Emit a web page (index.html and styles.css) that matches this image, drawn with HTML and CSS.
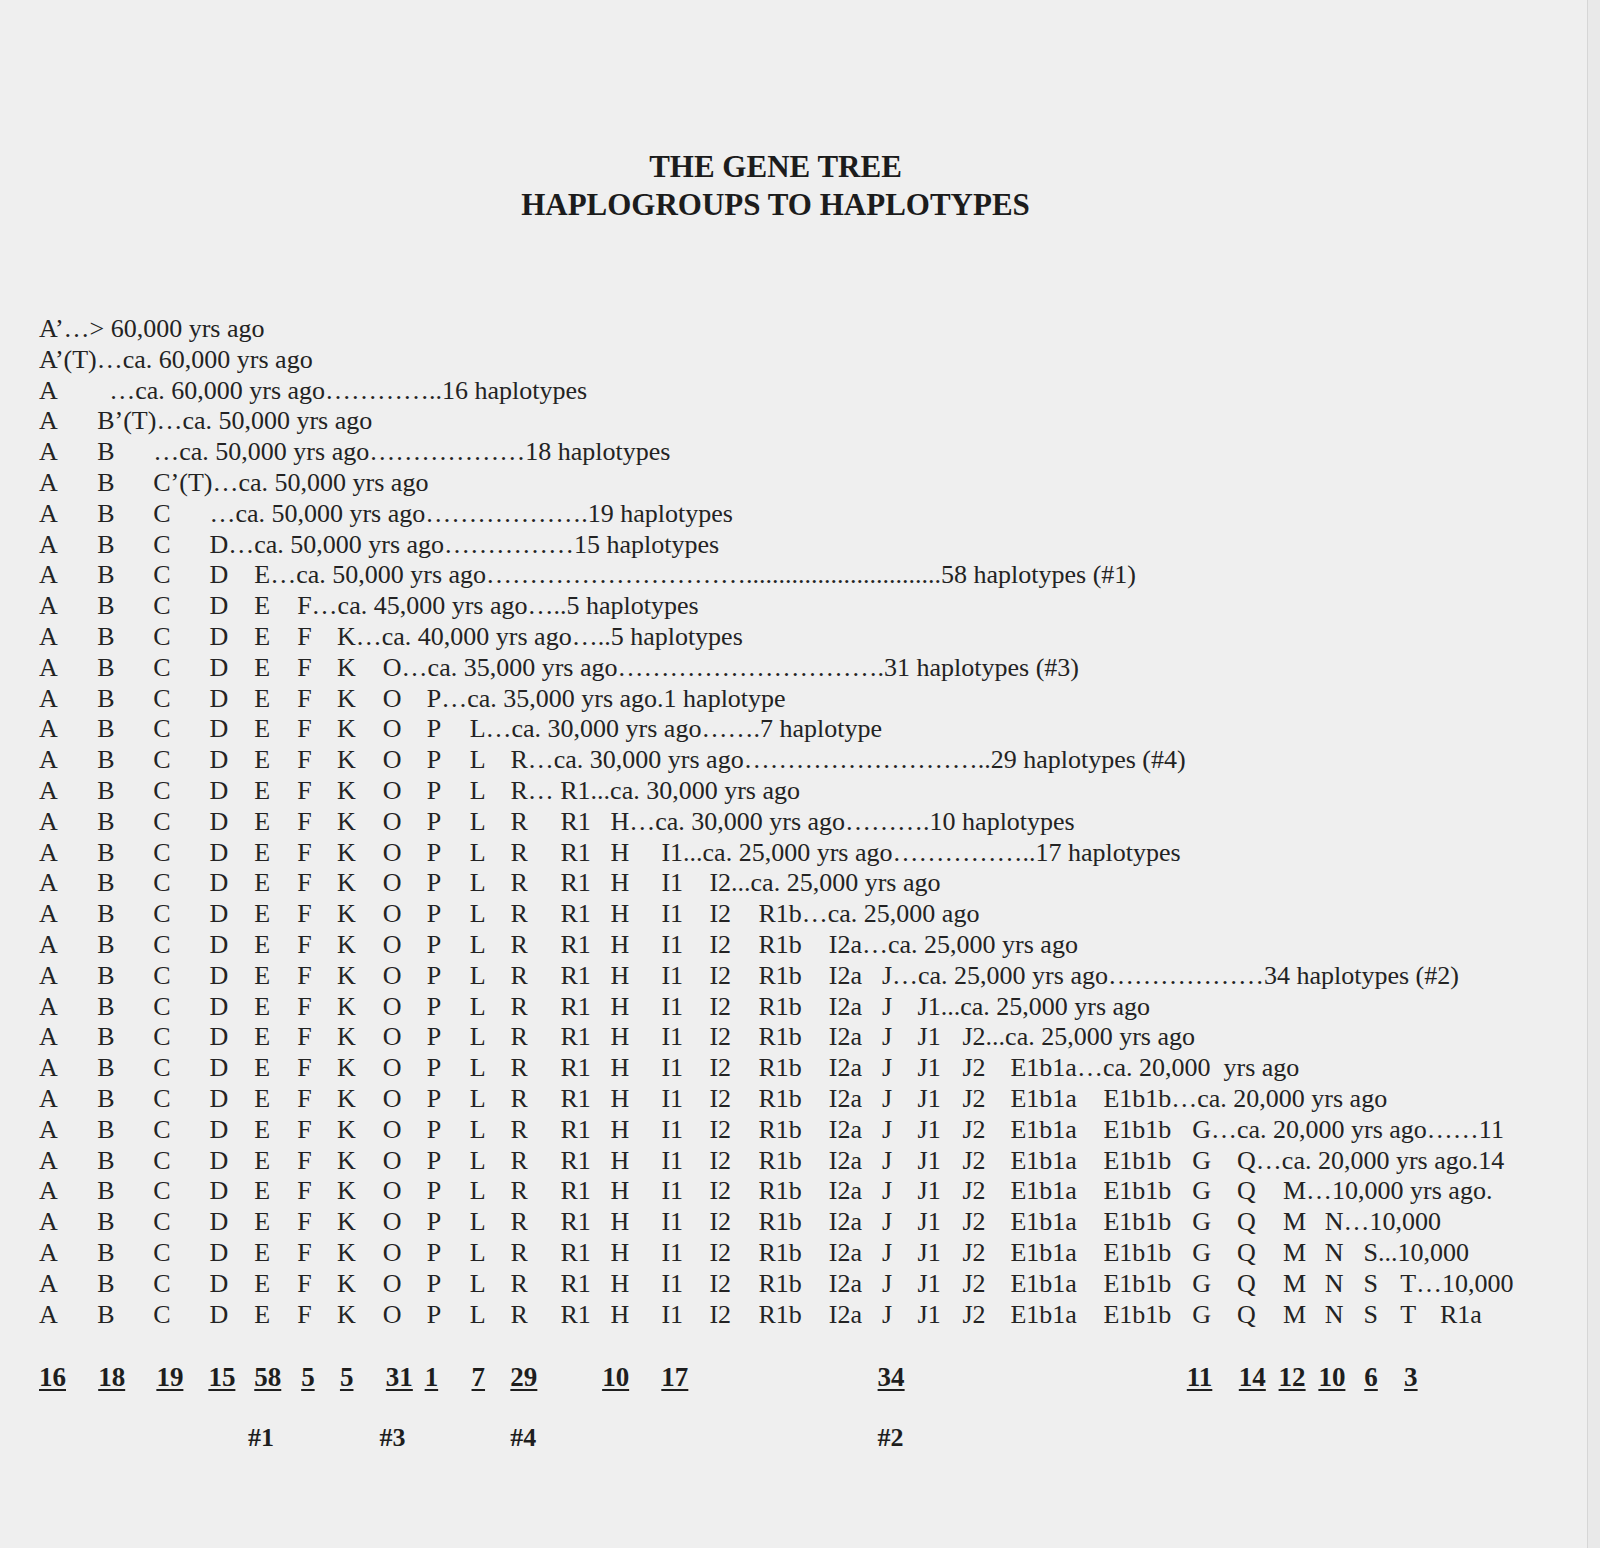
FILE: index.html
```html
<!DOCTYPE html>
<html lang="en">
<head>
<meta charset="utf-8">
<title>The Gene Tree – Haplogroups to Haplotypes</title>
<link rel="stylesheet" href="styles.css">
</head>
<body>
<div class="page">
  <header class="title">
    <h1>THE GENE TREE<br>HAPLOGROUPS TO HAPLOTYPES</h1>
  </header>

  <div class="tree">
    <div class="row"><span class="d">A’…&gt; 60,000 yrs ago</span></div>
    <div class="row"><span class="d">A’(T)…ca. 60,000 yrs ago</span></div>
    <div class="row"><span class="c">A</span><span class="d ind">…ca. 60,000 yrs ago…………..16 haplotypes</span></div>
    <div class="row"><span class="c">A</span><span class="d">B’(T)…ca. 50,000 yrs ago</span></div>
    <div class="row"><span class="c">A</span><span class="c">B</span><span class="d">…ca. 50,000 yrs ago………………18 haplotypes</span></div>
    <div class="row"><span class="c">A</span><span class="c">B</span><span class="d">C’(T)…ca. 50,000 yrs ago</span></div>
    <div class="row"><span class="c">A</span><span class="c">B</span><span class="c">C</span><span class="d">…ca. 50,000 yrs ago……………….19 haplotypes</span></div>
    <div class="row"><span class="c">A</span><span class="c">B</span><span class="c">C</span><span class="d">D…ca. 50,000 yrs ago……………15 haplotypes</span></div>
    <div class="row"><span class="c">A</span><span class="c">B</span><span class="c">C</span><span class="c">D</span><span class="d">E…ca. 50,000 yrs ago…………………………..............................58 haplotypes (#1)</span></div>
    <div class="row"><span class="c">A</span><span class="c">B</span><span class="c">C</span><span class="c">D</span><span class="c">E</span><span class="d">F…ca. 45,000 yrs ago…..5 haplotypes</span></div>
    <div class="row"><span class="c">A</span><span class="c">B</span><span class="c">C</span><span class="c">D</span><span class="c">E</span><span class="c">F</span><span class="d">K…ca. 40,000 yrs ago…..5 haplotypes</span></div>
    <div class="row"><span class="c">A</span><span class="c">B</span><span class="c">C</span><span class="c">D</span><span class="c">E</span><span class="c">F</span><span class="c">K</span><span class="d">O…ca. 35,000 yrs ago………………………….31 haplotypes (#3)</span></div>
    <div class="row"><span class="c">A</span><span class="c">B</span><span class="c">C</span><span class="c">D</span><span class="c">E</span><span class="c">F</span><span class="c">K</span><span class="c">O</span><span class="d">P…ca. 35,000 yrs ago.1 haplotype</span></div>
    <div class="row"><span class="c">A</span><span class="c">B</span><span class="c">C</span><span class="c">D</span><span class="c">E</span><span class="c">F</span><span class="c">K</span><span class="c">O</span><span class="c">P</span><span class="d">L…ca. 30,000 yrs ago…….7 haplotype</span></div>
    <div class="row"><span class="c">A</span><span class="c">B</span><span class="c">C</span><span class="c">D</span><span class="c">E</span><span class="c">F</span><span class="c">K</span><span class="c">O</span><span class="c">P</span><span class="c">L</span><span class="d">R…ca. 30,000 yrs ago………………………..29 haplotypes (#4)</span></div>
    <div class="row"><span class="c">A</span><span class="c">B</span><span class="c">C</span><span class="c">D</span><span class="c">E</span><span class="c">F</span><span class="c">K</span><span class="c">O</span><span class="c">P</span><span class="c">L</span><span class="d">R… R1...ca. 30,000 yrs ago</span></div>
    <div class="row"><span class="c">A</span><span class="c">B</span><span class="c">C</span><span class="c">D</span><span class="c">E</span><span class="c">F</span><span class="c">K</span><span class="c">O</span><span class="c">P</span><span class="c">L</span><span class="c">R</span><span class="c">R1</span><span class="d">H…ca. 30,000 yrs ago……….10 haplotypes</span></div>
    <div class="row"><span class="c">A</span><span class="c">B</span><span class="c">C</span><span class="c">D</span><span class="c">E</span><span class="c">F</span><span class="c">K</span><span class="c">O</span><span class="c">P</span><span class="c">L</span><span class="c">R</span><span class="c">R1</span><span class="c">H</span><span class="d">I1...ca. 25,000 yrs ago……………..17 haplotypes</span></div>
    <div class="row"><span class="c">A</span><span class="c">B</span><span class="c">C</span><span class="c">D</span><span class="c">E</span><span class="c">F</span><span class="c">K</span><span class="c">O</span><span class="c">P</span><span class="c">L</span><span class="c">R</span><span class="c">R1</span><span class="c">H</span><span class="c">I1</span><span class="d">I2...ca. 25,000 yrs ago</span></div>
    <div class="row"><span class="c">A</span><span class="c">B</span><span class="c">C</span><span class="c">D</span><span class="c">E</span><span class="c">F</span><span class="c">K</span><span class="c">O</span><span class="c">P</span><span class="c">L</span><span class="c">R</span><span class="c">R1</span><span class="c">H</span><span class="c">I1</span><span class="c">I2</span><span class="d">R1b…ca. 25,000 ago</span></div>
    <div class="row"><span class="c">A</span><span class="c">B</span><span class="c">C</span><span class="c">D</span><span class="c">E</span><span class="c">F</span><span class="c">K</span><span class="c">O</span><span class="c">P</span><span class="c">L</span><span class="c">R</span><span class="c">R1</span><span class="c">H</span><span class="c">I1</span><span class="c">I2</span><span class="c">R1b</span><span class="d">I2a…ca. 25,000 yrs ago</span></div>
    <div class="row"><span class="c">A</span><span class="c">B</span><span class="c">C</span><span class="c">D</span><span class="c">E</span><span class="c">F</span><span class="c">K</span><span class="c">O</span><span class="c">P</span><span class="c">L</span><span class="c">R</span><span class="c">R1</span><span class="c">H</span><span class="c">I1</span><span class="c">I2</span><span class="c">R1b</span><span class="c">I2a</span><span class="d">J…ca. 25,000 yrs ago………………34 haplotypes (#2)</span></div>
    <div class="row"><span class="c">A</span><span class="c">B</span><span class="c">C</span><span class="c">D</span><span class="c">E</span><span class="c">F</span><span class="c">K</span><span class="c">O</span><span class="c">P</span><span class="c">L</span><span class="c">R</span><span class="c">R1</span><span class="c">H</span><span class="c">I1</span><span class="c">I2</span><span class="c">R1b</span><span class="c">I2a</span><span class="c">J</span><span class="d">J1...ca. 25,000 yrs ago</span></div>
    <div class="row"><span class="c">A</span><span class="c">B</span><span class="c">C</span><span class="c">D</span><span class="c">E</span><span class="c">F</span><span class="c">K</span><span class="c">O</span><span class="c">P</span><span class="c">L</span><span class="c">R</span><span class="c">R1</span><span class="c">H</span><span class="c">I1</span><span class="c">I2</span><span class="c">R1b</span><span class="c">I2a</span><span class="c">J</span><span class="c">J1</span><span class="d">J2...ca. 25,000 yrs ago</span></div>
    <div class="row"><span class="c">A</span><span class="c">B</span><span class="c">C</span><span class="c">D</span><span class="c">E</span><span class="c">F</span><span class="c">K</span><span class="c">O</span><span class="c">P</span><span class="c">L</span><span class="c">R</span><span class="c">R1</span><span class="c">H</span><span class="c">I1</span><span class="c">I2</span><span class="c">R1b</span><span class="c">I2a</span><span class="c">J</span><span class="c">J1</span><span class="c">J2</span><span class="d">E1b1a…ca. 20,000&nbsp; yrs ago</span></div>
    <div class="row"><span class="c">A</span><span class="c">B</span><span class="c">C</span><span class="c">D</span><span class="c">E</span><span class="c">F</span><span class="c">K</span><span class="c">O</span><span class="c">P</span><span class="c">L</span><span class="c">R</span><span class="c">R1</span><span class="c">H</span><span class="c">I1</span><span class="c">I2</span><span class="c">R1b</span><span class="c">I2a</span><span class="c">J</span><span class="c">J1</span><span class="c">J2</span><span class="c">E1b1a</span><span class="d">E1b1b…ca. 20,000 yrs ago</span></div>
    <div class="row"><span class="c">A</span><span class="c">B</span><span class="c">C</span><span class="c">D</span><span class="c">E</span><span class="c">F</span><span class="c">K</span><span class="c">O</span><span class="c">P</span><span class="c">L</span><span class="c">R</span><span class="c">R1</span><span class="c">H</span><span class="c">I1</span><span class="c">I2</span><span class="c">R1b</span><span class="c">I2a</span><span class="c">J</span><span class="c">J1</span><span class="c">J2</span><span class="c">E1b1a</span><span class="c">E1b1b</span><span class="d">G…ca. 20,000 yrs ago……11</span></div>
    <div class="row"><span class="c">A</span><span class="c">B</span><span class="c">C</span><span class="c">D</span><span class="c">E</span><span class="c">F</span><span class="c">K</span><span class="c">O</span><span class="c">P</span><span class="c">L</span><span class="c">R</span><span class="c">R1</span><span class="c">H</span><span class="c">I1</span><span class="c">I2</span><span class="c">R1b</span><span class="c">I2a</span><span class="c">J</span><span class="c">J1</span><span class="c">J2</span><span class="c">E1b1a</span><span class="c">E1b1b</span><span class="c">G</span><span class="d">Q…ca. 20,000 yrs ago.14</span></div>
    <div class="row"><span class="c">A</span><span class="c">B</span><span class="c">C</span><span class="c">D</span><span class="c">E</span><span class="c">F</span><span class="c">K</span><span class="c">O</span><span class="c">P</span><span class="c">L</span><span class="c">R</span><span class="c">R1</span><span class="c">H</span><span class="c">I1</span><span class="c">I2</span><span class="c">R1b</span><span class="c">I2a</span><span class="c">J</span><span class="c">J1</span><span class="c">J2</span><span class="c">E1b1a</span><span class="c">E1b1b</span><span class="c">G</span><span class="c">Q</span><span class="d">M…10,000 yrs ago.</span></div>
    <div class="row"><span class="c">A</span><span class="c">B</span><span class="c">C</span><span class="c">D</span><span class="c">E</span><span class="c">F</span><span class="c">K</span><span class="c">O</span><span class="c">P</span><span class="c">L</span><span class="c">R</span><span class="c">R1</span><span class="c">H</span><span class="c">I1</span><span class="c">I2</span><span class="c">R1b</span><span class="c">I2a</span><span class="c">J</span><span class="c">J1</span><span class="c">J2</span><span class="c">E1b1a</span><span class="c">E1b1b</span><span class="c">G</span><span class="c">Q</span><span class="c">M</span><span class="d">N…10,000</span></div>
    <div class="row"><span class="c">A</span><span class="c">B</span><span class="c">C</span><span class="c">D</span><span class="c">E</span><span class="c">F</span><span class="c">K</span><span class="c">O</span><span class="c">P</span><span class="c">L</span><span class="c">R</span><span class="c">R1</span><span class="c">H</span><span class="c">I1</span><span class="c">I2</span><span class="c">R1b</span><span class="c">I2a</span><span class="c">J</span><span class="c">J1</span><span class="c">J2</span><span class="c">E1b1a</span><span class="c">E1b1b</span><span class="c">G</span><span class="c">Q</span><span class="c">M</span><span class="c">N</span><span class="d">S...10,000</span></div>
    <div class="row"><span class="c">A</span><span class="c">B</span><span class="c">C</span><span class="c">D</span><span class="c">E</span><span class="c">F</span><span class="c">K</span><span class="c">O</span><span class="c">P</span><span class="c">L</span><span class="c">R</span><span class="c">R1</span><span class="c">H</span><span class="c">I1</span><span class="c">I2</span><span class="c">R1b</span><span class="c">I2a</span><span class="c">J</span><span class="c">J1</span><span class="c">J2</span><span class="c">E1b1a</span><span class="c">E1b1b</span><span class="c">G</span><span class="c">Q</span><span class="c">M</span><span class="c">N</span><span class="c">S</span><span class="d">T…10,000</span></div>
    <div class="row"><span class="c">A</span><span class="c">B</span><span class="c">C</span><span class="c">D</span><span class="c">E</span><span class="c">F</span><span class="c">K</span><span class="c">O</span><span class="c">P</span><span class="c">L</span><span class="c">R</span><span class="c">R1</span><span class="c">H</span><span class="c">I1</span><span class="c">I2</span><span class="c">R1b</span><span class="c">I2a</span><span class="c">J</span><span class="c">J1</span><span class="c">J2</span><span class="c">E1b1a</span><span class="c">E1b1b</span><span class="c">G</span><span class="c">Q</span><span class="c">M</span><span class="c">N</span><span class="c">S</span><span class="c">T</span><span class="d">R1a</span></div>
  </div>

  <div class="totals">
    <span>16</span><span>18</span><span>19</span><span>15</span><span>58</span><span>5</span><span>5</span><span>31</span><span>1</span><span>7</span><span>29</span><span>10</span><span>17</span><span>34</span><span>11</span><span>14</span><span>12</span><span>10</span><span>6</span><span>3</span>
  </div>

  <div class="marks">
    <span>#1</span><span>#3</span><span>#4</span><span>#2</span>
  </div>
</div>
</body>
</html>
```

FILE: styles.css
```css
html, body {
  margin: 0;
  padding: 0;
}

body {
  background: #e9e9e9;
  color: #232323;
  font-family: "Liberation Serif", "Times New Roman", serif;
}

.page {
  width: 1588px;
  height: 1548px;
  background: #efefef;
  border-right: 1px solid #d6d6d6;
  box-sizing: border-box;
  overflow: hidden;
}

.title {
  padding-top: 148px;
  width: 1551px;
  text-align: center;
}

.title h1 {
  margin: 0;
  font-size: 31px;
  line-height: 38px;
  font-weight: bold;
  color: #1c1c1c;
}

.tree {
  margin-top: 90px;
  padding-left: 39px;
  font-size: 26px;
  line-height: 30.8px;
}

.row {
  display: flex;
  white-space: nowrap;
}

.c {
  flex: none;
}

.row > .c:nth-child(1) { width: 58.2px; }
.row > .c:nth-child(2) { width: 56.1px; }
.row > .c:nth-child(3) { width: 56.1px; }
.row > .c:nth-child(4) { width: 44.9px; }
.row > .c:nth-child(5) { width: 42.9px; }
.row > .c:nth-child(6) { width: 39.8px; }
.row > .c:nth-child(7) { width: 45.9px; }
.row > .c:nth-child(8) { width: 43.9px; }
.row > .c:nth-child(9) { width: 42.9px; }
.row > .c:nth-child(10) { width: 40.8px; }
.row > .c:nth-child(11) { width: 50px; }
.row > .c:nth-child(12) { width: 50px; }
.row > .c:nth-child(13) { width: 51px; }
.row > .c:nth-child(14) { width: 48px; }
.row > .c:nth-child(15) { width: 49px; }
.row > .c:nth-child(16) { width: 70.4px; }
.row > .c:nth-child(17) { width: 53.1px; }
.row > .c:nth-child(18) { width: 35.7px; }
.row > .c:nth-child(19) { width: 44.9px; }
.row > .c:nth-child(20) { width: 48px; }
.row > .c:nth-child(21) { width: 92.9px; }
.row > .c:nth-child(22) { width: 88.8px; }
.row > .c:nth-child(23) { width: 44.9px; }
.row > .c:nth-child(24) { width: 45.9px; }
.row > .c:nth-child(25) { width: 41.8px; }
.row > .c:nth-child(26) { width: 38.8px; }
.row > .c:nth-child(27) { width: 36.7px; }
.row > .c:nth-child(28) { width: 39.8px; }

.d.ind {
  margin-left: 12px;
}

.totals {
  margin-top: 32px;
  padding-left: 39px;
  display: grid;
  grid-template-columns: 59.2px 58.2px 52px 45.9px 46.9px 38.8px 45.9px 38.8px 46.9px 38.8px 91.8px 59.2px 216.3px 309.2px 52px 39.8px 39.8px 45.9px 39.8px auto;
  font-size: 27px;
  line-height: 30px;
  font-weight: bold;
  color: #1e1e1e;
}

.totals span {
  justify-self: start;
  text-decoration: underline;
  text-decoration-thickness: 2px;
  text-underline-offset: 3px;
}

.marks {
  margin-top: 31px;
  padding-left: 248px;
  display: grid;
  grid-template-columns: 131.6px 130.6px 367.3px auto;
  font-size: 26px;
  line-height: 30px;
  font-weight: bold;
  color: #1e1e1e;
}

.marks span {
  justify-self: start;
}
```
